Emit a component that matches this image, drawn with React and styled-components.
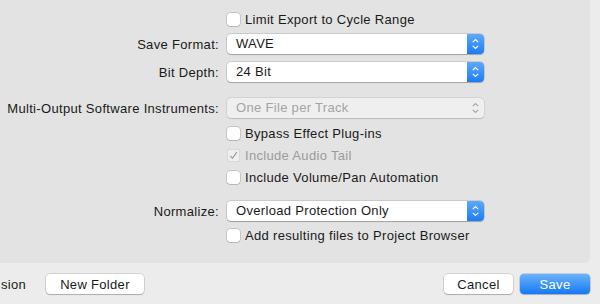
import React from "react";
import styled, { createGlobalStyle } from "styled-components";

const Global = createGlobalStyle`
  html, body { margin: 0; padding: 0; }
  body {
    width: 600px; height: 304px; overflow: hidden;
    background: #ececec;
    font-family: "Liberation Sans", Arial, sans-serif;
    font-size: 13px;
    letter-spacing: 0.32px;
    color: #1a1a1a;
    -webkit-font-smoothing: antialiased;
  }
`;

const Sheet = styled.div`
  width: 600px;
  height: 304px;
  display: flex;
  flex-direction: column;
  background: #ececec;
`;

const Panel = styled.div`
  width: 590px;
  height: 263px;
  box-sizing: border-box;
  background: #e3e3e3;
  border-bottom-right-radius: 5px;
  padding-top: 8px;
  display: flex;
  flex-direction: column;
`;

const Row = styled.div`
  display: grid;
  grid-template-columns: 219px 257px;
  column-gap: 8px;
  height: 22px;
  align-items: center;
  margin-top: ${(p) => p.$gap || 0}px;
`;

const Label = styled.div`
  text-align: right;
  white-space: nowrap;
  color: #1a1a1a;
`;

const Popup = styled.div`
  grid-column: 2;
  height: 20px;
  box-sizing: border-box;
  display: flex;
  align-items: stretch;
  border-radius: 4px;
  background: ${(p) => (p.$disabled ? "#efefef" : "#ffffff")};
  box-shadow: ${(p) =>
    p.$disabled
      ? "0 0 0 0.5px rgba(0,0,0,0.12), 0 0.5px 1px rgba(0,0,0,0.12)"
      : "0 0 0 0.5px rgba(0,0,0,0.22), 0 1px 1px rgba(0,0,0,0.2)"};
  overflow: hidden;
`;

const PopupText = styled.div`
  flex: 1;
  padding-left: 9px;
  line-height: 20px;
  white-space: nowrap;
  color: ${(p) => (p.$disabled ? "#a4a4a4" : "#1a1a1a")};
`;

const Stepper = styled.div`
  width: 17px;
  display: flex;
  align-items: center;
  justify-content: center;
  background: ${(p) =>
    p.$disabled ? "transparent" : "linear-gradient(#5ea9fb, #1c7cf4)"};
`;

const CheckRow = styled.label`
  grid-column: 2;
  display: flex;
  align-items: center;
  gap: 5px;
  white-space: nowrap;
  color: ${(p) => (p.$disabled ? "#9b9b9b" : "#1a1a1a")};
`;

const Box = styled.span`
  width: 13px;
  height: 13px;
  box-sizing: border-box;
  border-radius: 3px;
  background: ${(p) => (p.$disabled ? "#efefef" : "#ffffff")};
  box-shadow: ${(p) =>
    p.$disabled
      ? "inset 0 0 0 0.5px rgba(0,0,0,0.18)"
      : "0 0 0 0.5px rgba(0,0,0,0.25), 0 0.5px 0.5px rgba(0,0,0,0.15)"};
  display: flex;
  align-items: center;
  justify-content: center;
`;

const Footer = styled.div`
  flex: 1;
  display: flex;
  align-items: center;
  padding: 1px 10px 0 1px;
`;

const SideText = styled.div`
  width: 21px;
  white-space: nowrap;
  margin-right: 24px;
`;

const Button = styled.button`
  height: 20px;
  width: ${(p) => p.$w}px;
  box-sizing: border-box;
  border: none;
  border-radius: 4px;
  font-family: inherit;
  font-size: 13px;
  letter-spacing: 0.32px;
  padding: 0;
  margin-left: ${(p) => p.$ml || 0}px;
  color: ${(p) => (p.$primary ? "#ffffff" : "#1a1a1a")};
  background: ${(p) =>
    p.$primary ? "linear-gradient(#6cb3fa, #1479f4)" : "#ffffff"};
  box-shadow: ${(p) =>
    p.$primary
      ? "0 0 0 0.5px rgba(0,60,160,0.35), 0 1px 1px rgba(0,0,0,0.15)"
      : "0 0 0 0.5px rgba(0,0,0,0.22), 0 1px 1px rgba(0,0,0,0.18)"};
`;

const Spacer = styled.div`
  flex: 1;
`;

const Chevrons = ({ color }) => (
  <svg width="17" height="20" viewBox="0 0 17 20">
    <path d="M5.8 8.2 L8.5 5.5 L11.2 8.2" fill="none" stroke={color} strokeWidth="1.2" />
    <path d="M5.8 11.8 L8.5 14.5 L11.2 11.8" fill="none" stroke={color} strokeWidth="1.2" />
  </svg>
);

const PopupButton = ({ value, disabled }) => (
  <Popup $disabled={disabled}>
    <PopupText $disabled={disabled}>{value}</PopupText>
    <Stepper $disabled={disabled}>
      <Chevrons color={disabled ? "#a8a8a8" : "#ffffff"} />
    </Stepper>
  </Popup>
);

const Checkbox = ({ label, checked, disabled }) => (
  <CheckRow $disabled={disabled}>
    <Box $disabled={disabled}>
      {checked && (
        <svg width="11" height="11" viewBox="0 0 11 11">
          <path d="M2.3 5.8 L4.4 8.3 L8.8 2.2" fill="none" stroke="#a0a0a0" strokeWidth="1.3" />
        </svg>
      )}
    </Box>
    {label}
  </CheckRow>
);

export default function App() {
  return (
    <>
      <Global />
      <Sheet>
        <Panel>
          <Row>
            <Checkbox label="Limit Export to Cycle Range" />
          </Row>
          <Row $gap={3}>
            <Label>Save Format:</Label>
            <PopupButton value="WAVE" />
          </Row>
          <Row $gap={6}>
            <Label>Bit Depth:</Label>
            <PopupButton value="24 Bit" />
          </Row>
          <Row $gap={14}>
            <Label>Multi-Output Software Instruments:</Label>
            <PopupButton value="One File per Track" disabled />
          </Row>
          <Row $gap={3}>
            <Checkbox label="Bypass Effect Plug-ins" />
          </Row>
          <Row>
            <Checkbox label="Include Audio Tail" checked disabled />
          </Row>
          <Row>
            <Checkbox label="Include Volume/Pan Automation" />
          </Row>
          <Row $gap={12}>
            <Label>Normalize:</Label>
            <PopupButton value="Overload Protection Only" />
          </Row>
          <Row $gap={2}>
            <Checkbox label="Add resulting files to Project Browser" />
          </Row>
        </Panel>
        <Footer>
          <SideText>sion</SideText>
          <Button $w={98}>New Folder</Button>
          <Spacer />
          <Button $w={69}>Cancel</Button>
          <Button $w={70} $ml={7} $primary>Save</Button>
        </Footer>
      </Sheet>
    </>
  );
}
